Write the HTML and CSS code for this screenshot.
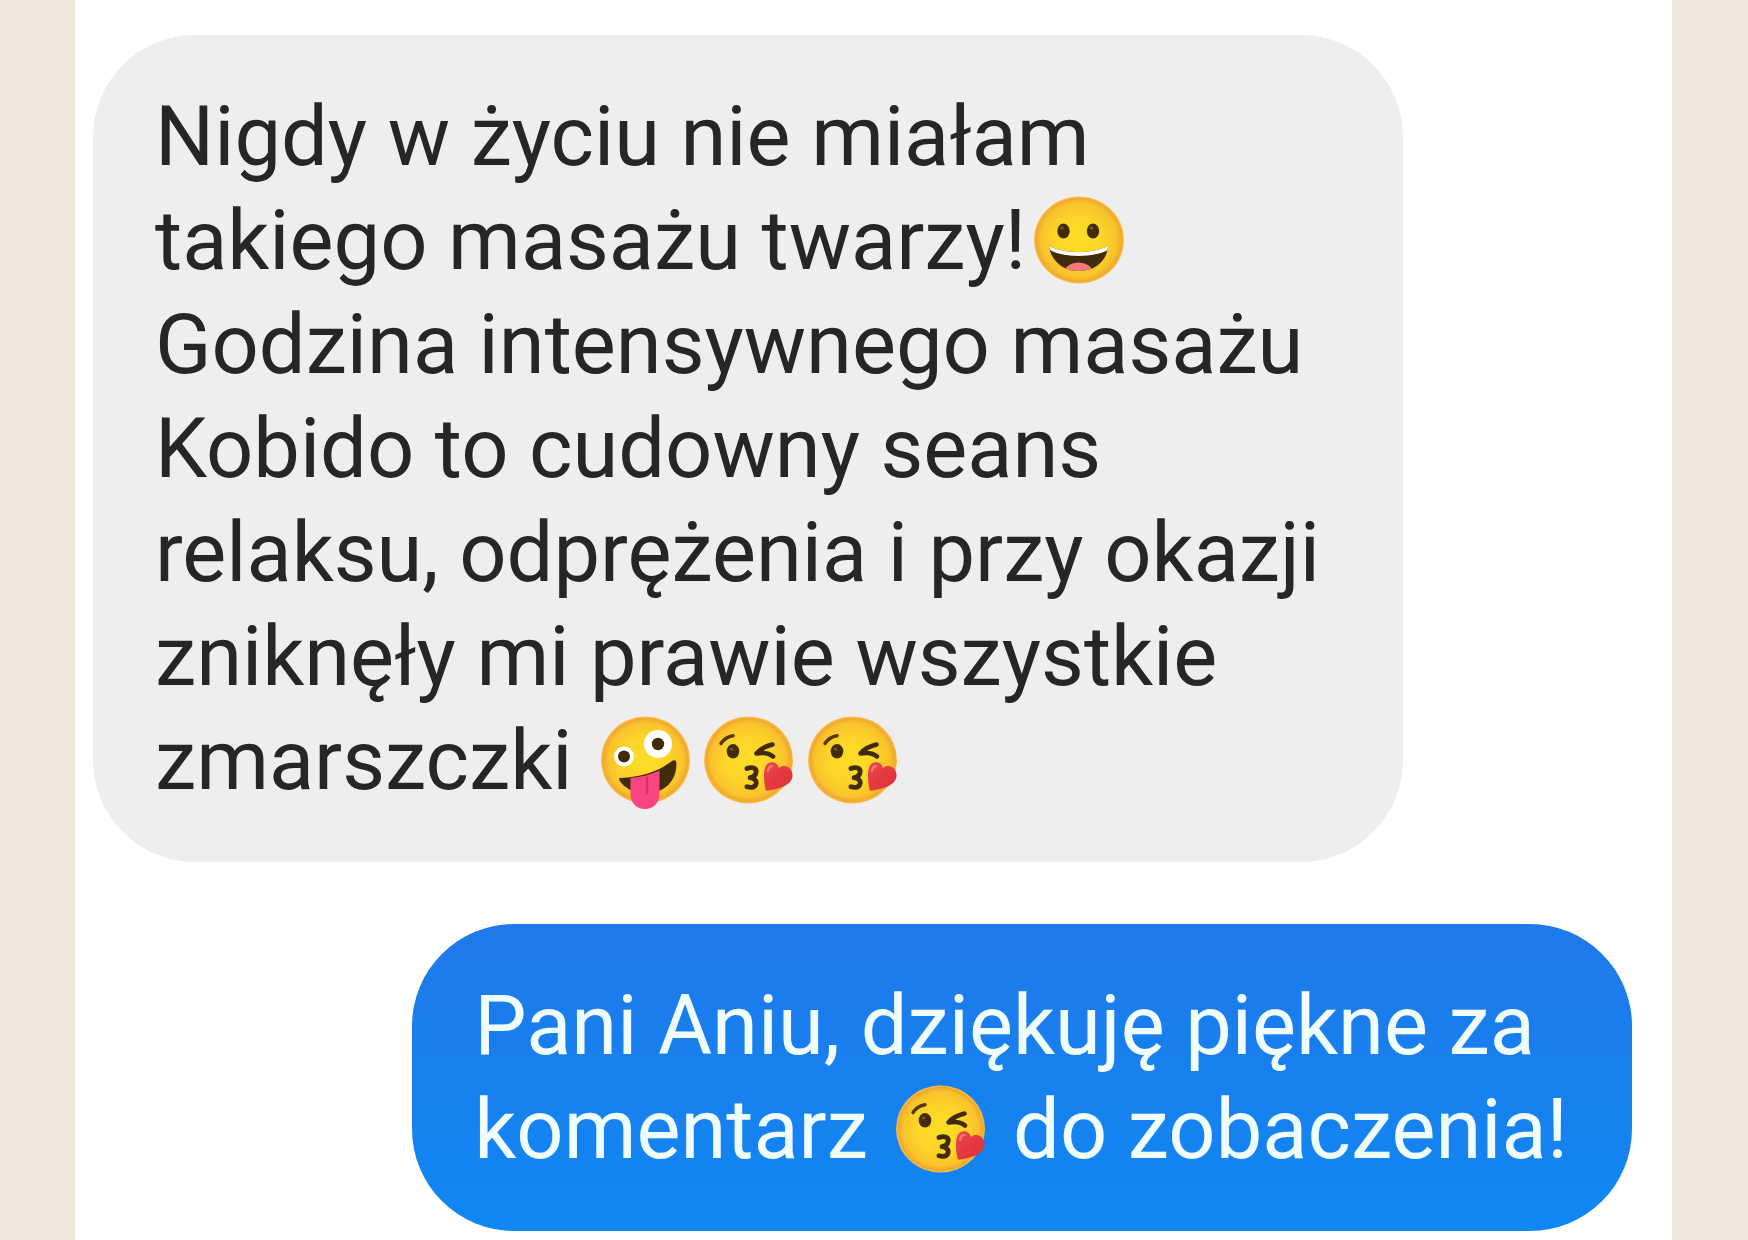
FILE: index.html
```html
<!DOCTYPE html>
<html lang="pl">
<head>
<meta charset="utf-8">
<meta name="viewport" content="width=device-width, initial-scale=1">
<title>Kobido – opinie</title>
<link rel="stylesheet" href="styles.css">
</head>
<body>
<svg class="sprites" aria-hidden="true">
  <defs>
    <radialGradient id="skin" cx="0.5" cy="0.5" r="0.5">
      <stop offset="0" stop-color="#fdde26"/>
      <stop offset="0.55" stop-color="#fcd428"/>
      <stop offset="0.85" stop-color="#f9c22b"/>
      <stop offset="0.95" stop-color="#f0a92e"/>
      <stop offset="1" stop-color="#fbc04a"/>
    </radialGradient>
    <linearGradient id="heart-fill" x1="0" y1="0" x2="1" y2="1">
      <stop offset="0" stop-color="#ee4450"/>
      <stop offset="1" stop-color="#dd2f34"/>
    </linearGradient>
    <clipPath id="grin-mouth">
      <path d="M23 57C40 65 65 65 82 57C81 72 69 82 53 82S25 72 23 57Z"/>
    </clipPath>
  </defs>
  <symbol id="grin" viewBox="0 0 104 104">
    <ellipse cx="53" cy="51" rx="45" ry="43.5" fill="url(#skin)"/>
    <ellipse cx="37.5" cy="42" rx="6.2" ry="7.6" fill="#422b0d"/>
    <ellipse cx="67" cy="42" rx="6.2" ry="7.6" fill="#422b0d"/>
    <circle cx="36" cy="39" r="1.6" fill="#7a5a28"/>
    <circle cx="65.5" cy="39" r="1.6" fill="#7a5a28"/>
    <g clip-path="url(#grin-mouth)">
      <path d="M20 50H86V84H20Z" fill="#422b0d"/>
      <ellipse cx="52.5" cy="83" rx="14" ry="9.5" fill="#f5777b"/>
      <path d="M20 54H85L82 61C66 69 39 69 24 61Z" fill="#fffdf2"/>
    </g>
  </symbol>
  <symbol id="zany" viewBox="0 0 104 104">
    <ellipse cx="52.5" cy="51" rx="44.5" ry="43.5" fill="url(#skin)"/>
    <circle cx="65" cy="35" r="14" fill="#fff"/>
    <circle cx="65" cy="35" r="6.2" fill="#422b0d"/>
    <circle cx="31" cy="47.5" r="10" fill="#fff"/>
    <circle cx="31" cy="47.5" r="6" fill="#422b0d"/>
    <path d="M27 69C48 68 65 63 79 52C81 50.5 83 51 83.3 53C84.5 68 75 82 58 84C44 86 32 80 26.5 71.5C25.7 70 26 69 27 69Z" fill="#422b0d"/>
    <path d="M37.5 69C48 68 58 65.5 66.5 61.5V85C66.5 94 60 100 52 100S37.5 94 37.5 85Z" fill="#fb4483"/>
    <path d="M54 69V84" stroke="#d92f6b" stroke-width="2.5" stroke-linecap="round"/>
  </symbol>
  <symbol id="kiss" viewBox="0 0 104 104">
    <ellipse cx="51.5" cy="51" rx="44.5" ry="43.5" fill="url(#skin)"/>
    <path d="M24 34.5C27 30 31 27.5 36 26.8" fill="none" stroke="#55360f" stroke-width="3.4" stroke-linecap="round"/>
    <ellipse cx="36" cy="42.3" rx="6.3" ry="7.3" fill="#422b0d"/>
    <circle cx="34.5" cy="40" r="1.6" fill="#7a5a28"/>
    <path d="M75.5 35.5C69 37 63 40 59.5 44.5C65 43.5 72 44 76 47.5" fill="#422b0d" fill-opacity="0" stroke="#422b0d" stroke-width="4.6" stroke-linecap="round" stroke-linejoin="round"/>
    <path d="M59 45L67 39V46Z" fill="#422b0d"/>
    <path d="M50 59.5C55 57.5 60 59 59 63.5C58.5 66.5 56 68.3 53 68.7C58 69.5 60 72 59 75C58 78.5 54 79 50 77.8" fill="none" stroke="#422b0d" stroke-width="4.8" stroke-linecap="round" stroke-linejoin="round"/>
    <path d="M68.5 80C67 73 66 64 68.5 57.5C71 51.5 80 51.5 82 59C88 54 96 59 95.5 67C95 76 83 79.500 71.5 81.5C69.5 82 68.8 81.5 68.5 80Z" fill="url(#heart-fill)"/>
    <path d="M71 62C71.5 58.5 73 57 75.5 57" fill="none" stroke="#f67880" stroke-width="2.2" stroke-linecap="round"/>
  </symbol>
</svg>
<main class="chat">
  <p class="bubble received">Nigdy w życiu nie miałam<br>
    takiego masażu twarzy!<svg class="emoji" role="img" aria-label="😀"><use href="#grin"/></svg><br>
    Godzina intensywnego masażu<br>
    Kobido to cudowny seans<br>
    relaksu, odprężenia i przy okazji<br>
    zniknęły mi prawie wszystkie<br>
    zmarszczki <svg class="emoji" role="img" aria-label="🤪"><use href="#zany"/></svg><svg class="emoji" role="img" aria-label="😘"><use href="#kiss"/></svg><svg class="emoji" role="img" aria-label="😘"><use href="#kiss"/></svg></p>
  <p class="bubble sent">Pani Aniu, dziękuję piękne za<br>
    komentarz <svg class="emoji" role="img" aria-label="😘"><use href="#kiss"/></svg> do zobaczenia!</p>
</main>
</body>
</html>
```
FILE: styles.css
```css
* {
  box-sizing: border-box;
}

body {
  margin: 0;
  background: #f0e6dc;
  font-family: Roboto, "Liberation Sans", sans-serif;
}

.sprites {
  position: absolute;
  width: 0;
  height: 0;
}

.chat {
  display: flex;
  flex-direction: column;
  gap: 62px;
  min-height: 100vh;
  margin: 0 76px 0 75px;
  padding: 35px 40px 9px 18px;
  background: #fff;
}

.bubble {
  margin: 0;
  padding: 50px 64px 49px 62px;
  border-radius: 102px;
  font-size: 83px;
  line-height: 104px;
}

.received {
  align-self: flex-start;
  width: 1310px;
  max-width: 100%;
  background: #eee;
  color: #262626;
}

.sent {
  align-self: flex-end;
  background: linear-gradient(#1f79ea, #1087f3);
  color: #f0fdff;
}

.emoji {
  display: inline-block;
  width: 104px;
  height: 104px;
  vertical-align: top;
}
```
